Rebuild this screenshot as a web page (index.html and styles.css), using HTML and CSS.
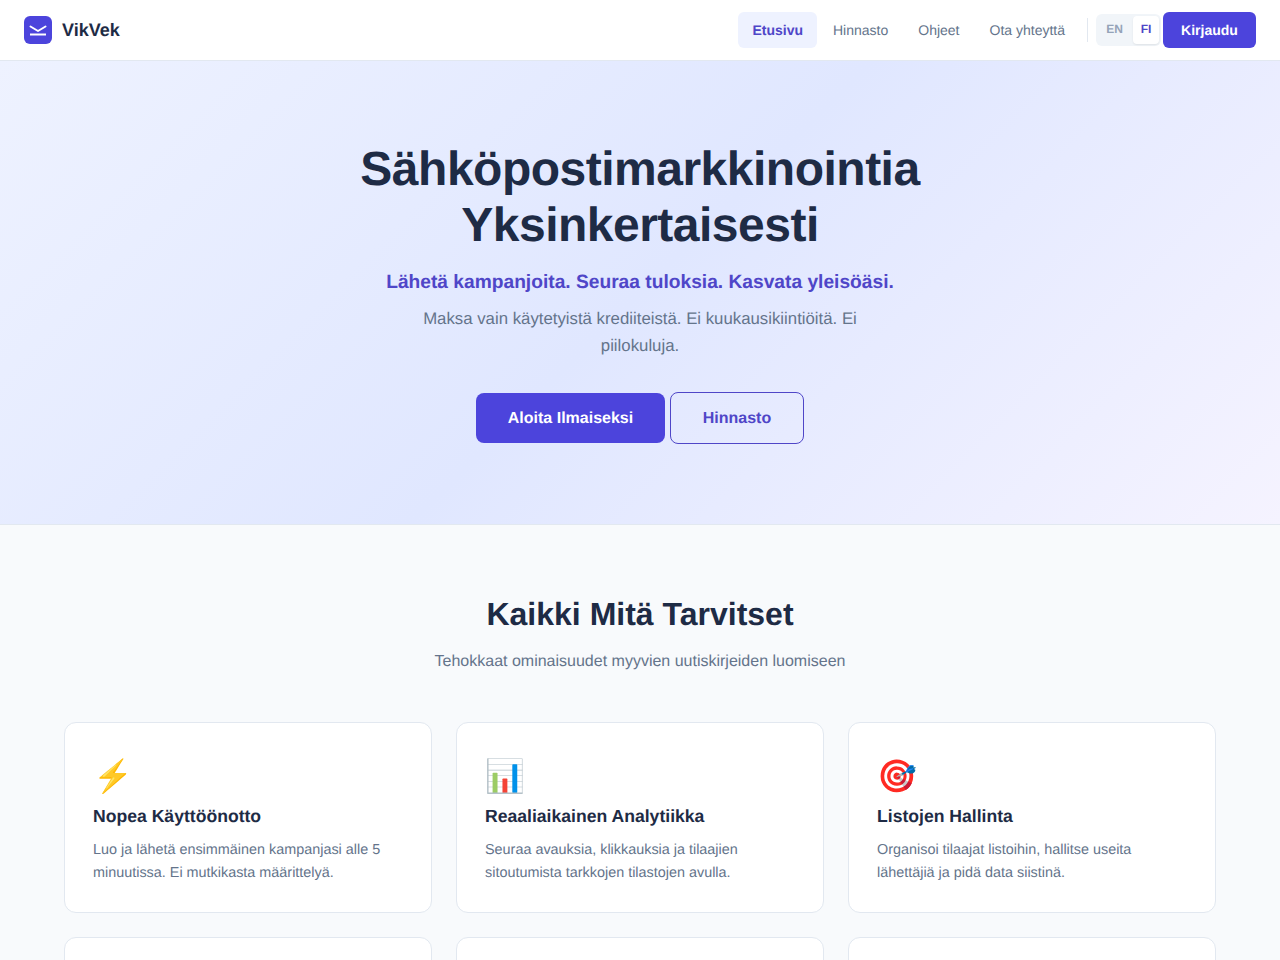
FILE: index.html
```html
<!DOCTYPE html>
<html lang="fi">
<head>
<meta charset="utf-8">
<title>VikVek</title>
<link rel="stylesheet" href="styles.css">
</head>
<body>
<header class="topbar">
  <a class="brand" href="#">
    <span class="brand-icon">
      <svg width="28" height="28" viewBox="0 0 28 28" fill="none" stroke="#fff" stroke-width="2"><path d="M6.5 10.5 L14 15 L21.5 10.5" stroke-linecap="round" stroke-linejoin="round"/><path d="M6 18.5 H22"/></svg>
    </span>
    <span class="brand-name">VikVek</span>
  </a>
  <nav class="nav">
    <a class="nav-link active" href="#">Etusivu</a>
    <a class="nav-link" href="#">Hinnasto</a>
    <a class="nav-link" href="#">Ohjeet</a>
    <a class="nav-link" href="#">Ota yhteyttä</a>
    <span class="nav-divider"></span>
    <div class="lang"><span class="lang-opt">EN</span><span class="lang-opt current">FI</span></div>
    <a class="login" href="#">Kirjaudu</a>
  </nav>
</header>
<section class="hero">
  <h1>Sähköpostimarkkinointia<br>Yksinkertaisesti</h1>
  <p class="hero-sub">Lähetä kampanjoita. Seuraa tuloksia. Kasvata yleisöäsi.</p>
  <p class="hero-desc">Maksa vain käytetyistä krediiteistä. Ei kuukausikiintiöitä. Ei piilokuluja.</p>
  <div class="hero-actions">
    <a class="btn btn-primary" href="#">Aloita Ilmaiseksi</a>
    <a class="btn btn-outline" href="#">Hinnasto</a>
  </div>
</section>
<section class="features">
  <h2>Kaikki Mitä Tarvitset</h2>
  <p class="features-sub">Tehokkaat ominaisuudet myyvien uutiskirjeiden luomiseen</p>
  <div class="grid">
    <article class="card">
      <div class="card-icon">⚡</div>
      <h3>Nopea Käyttöönotto</h3>
      <p>Luo ja lähetä ensimmäinen kampanjasi alle 5 minuutissa. Ei mutkikasta määrittelyä.</p>
    </article>
    <article class="card">
      <div class="card-icon">📊</div>
      <h3>Reaaliaikainen Analytiikka</h3>
      <p>Seuraa avauksia, klikkauksia ja tilaajien sitoutumista tarkkojen tilastojen avulla.</p>
    </article>
    <article class="card">
      <div class="card-icon">🎯</div>
      <h3>Listojen Hallinta</h3>
      <p>Organisoi tilaajat listoihin, hallitse useita lähettäjiä ja pidä data siistinä.</p>
    </article>
    <article class="card">
      <div class="card-icon">✉️</div>
      <h3>Kauniit Mallit</h3>
      <p>Valitse valmiista malleista ja muokkaa ne omaan brändiisi sopiviksi.</p>
    </article>
    <article class="card">
      <div class="card-icon">🔒</div>
      <h3>Turvallinen</h3>
      <p>Tietosi on suojattu ja kaikki lähetykset hoidetaan turvallisesti.</p>
    </article>
    <article class="card">
      <div class="card-icon">💳</div>
      <h3>Reilu Hinnoittelu</h3>
      <p>Maksa vain käytetyistä krediiteistä ilman kuukausimaksuja.</p>
    </article>
  </div>
</section>
</body>
</html>
```
FILE: styles.css
```css
* { box-sizing: border-box; }
html, body { margin: 0; padding: 0; }
body {
  font-family: "Liberation Sans", Arial, sans-serif;
  color: #1e2b45;
  background: #f8fafc;
  text-rendering: geometricPrecision;
}
a { text-decoration: none; }
.topbar {
  height: 61px;
  padding: 0 24px;
  display: flex;
  align-items: center;
  justify-content: space-between;
  background: #fff;
  border-bottom: 1px solid #e2e8f0;
}
.brand { display: flex; align-items: center; gap: 10px; }
.brand-icon {
  width: 28px;
  height: 28px;
  border-radius: 6px;
  background: #4c44dc;
  display: block;
}
.brand-icon svg { display: block; }
.brand-name {
  font-size: 18px;
  font-weight: 700;
  color: #1e2b45;
}
.nav { display: flex; align-items: center; }
.nav-link {
  padding: 0 15px;
  height: 36px;
  line-height: 36px;
  font-size: 14px;
  color: #64748b;
  border-radius: 6px;
}
.nav-link.active {
  margin-right: 1px;
  padding: 0 14px;
  background: #eef2ff;
  color: #4f46c8;
  font-weight: 700;
}
.nav-divider {
  width: 1px;
  height: 24px;
  background: #e2e8f0;
  margin: 0 8px 0 7px;
}
.lang {
  display: flex;
  padding: 2px;
  height: 32px;
  border-radius: 6px;
  background: #f1f5f9;
}
.lang-opt {
  line-height: 26px;
  text-align: center;
  font-size: 12px;
  font-weight: 700;
  color: #94a3b8;
  border-radius: 4px;
}
.lang-opt:first-child { width: 33px; margin-right: 2px; }
.lang-opt.current {
  width: 26px;
  height: 28px;
  background: #fff;
  color: #4f46c8;
  box-shadow: 0 1px 2px rgba(0,0,0,.08);
}
.login {
  margin-left: 2px;
  width: 93px;
  height: 36px;
  line-height: 36px;
  text-align: center;
  font-size: 14px;
  font-weight: 700;
  color: #fff;
  background: #4c44dc;
  border-radius: 6px;
}
.hero {
  height: 464px;
  padding-top: 81px;
  text-align: center;
  background: linear-gradient(135deg, #eef2ff 0%, #e0e7ff 50%, #f5f3ff 100%);
  border-bottom: 1px solid #e2e8f0;
}
.hero h1 {
  margin: 0;
  font-size: 48px;
  line-height: 56px;
  font-weight: 700;
  letter-spacing: -0.5px;
  color: #1e2b45;
}
.hero-sub {
  margin: 15px 0 0;
  font-size: 19.2px;
  line-height: 27px;
  font-weight: 700;
  color: #4f46c8;
}
.hero-desc {
  margin: 9px auto 0;
  width: 480px;
  font-size: 16.8px;
  line-height: 27px;
  color: #64748b;
}
.hero-actions {
  margin-top: 33px;
  display: flex;
  justify-content: center;
  align-items: center;
  gap: 5px;
}
.btn {
  display: block;
  font-size: 16px;
  font-weight: 700;
  border-radius: 8px;
  text-align: center;
}
.btn-primary {
  width: 189px;
  height: 50px;
  line-height: 52px;
  background: #4c44dc;
  color: #fff;
}
.btn-outline {
  width: 134px;
  height: 52px;
  line-height: 52px;
  border: 1px solid #4f46c8;
  color: #4f46c8;
}
.features { padding: 65px 64px 0; text-align: center; }
.features h2 {
  margin: 0;
  font-size: 32px;
  line-height: 48px;
  font-weight: 700;
  color: #1e2b45;
}
.features-sub {
  margin: 11px 0 0;
  font-size: 16px;
  line-height: 26px;
  color: #64748b;
}
.grid {
  margin-top: 47px;
  display: grid;
  grid-template-columns: repeat(3, 1fr);
  gap: 24px;
  text-align: left;
}
.card {
  height: 191px;
  padding: 29px 28px 0;
  background: #fff;
  border: 1px solid #e2e8f0;
  border-radius: 12px;
}
.card-icon {
  font-size: 32px;
  line-height: 48px;
  font-family: "Noto Color Emoji", sans-serif;
}
.card h3 {
  margin: 3px 0 0;
  font-size: 17.6px;
  line-height: 26px;
  font-weight: 700;
  color: #1e2b45;
}
.card p {
  margin: 10px 0 0;
  font-size: 14.4px;
  line-height: 23px;
  color: #64748b;
}
```
